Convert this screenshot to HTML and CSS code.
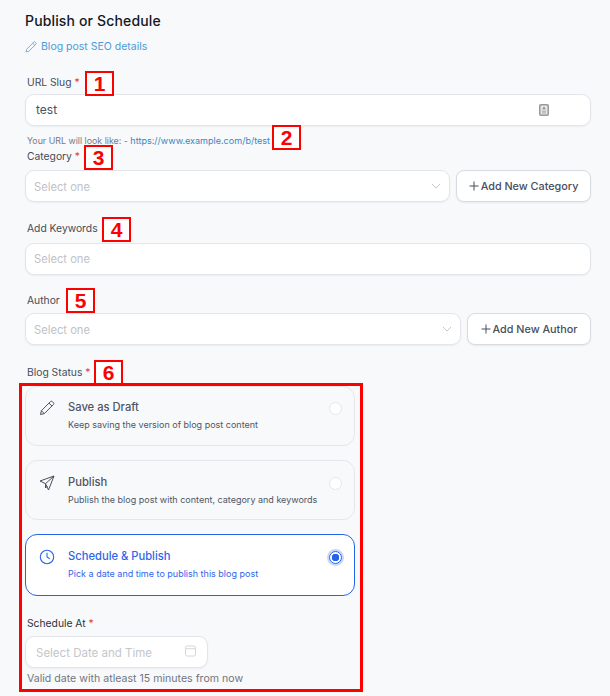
FILE: index.html
```html
<!DOCTYPE html>
<html lang="en">
<head>
<meta charset="utf-8">
<title>Publish or Schedule</title>
<link rel="stylesheet" href="styles.css">
</head>
<body>
<main class="page">
  <h1 class="title">Publish or Schedule</h1>
  <a class="seo-link" href="#">
    <svg class="seo-icon" viewBox="0 0 16 16" fill="none" stroke="currentColor" stroke-width="1"><path d="M1.500 14.500l.8-3.600L11.600 1.600a1.400 1.400 0 0 1 2 0l.8.8a1.400 1.400 0 0 1 0 2L5.100 13.700z"/><path d="M10.200 3l2.800 2.800"/></svg>
    Blog post SEO details
  </a>

  <div class="label label-slug">URL Slug <span class="req">*</span></div>
  <div class="field">
    <span class="value">test</span>
    <svg class="slug-icon" viewBox="0 0 10 12"><rect x=".75" y=".75" width="8.500" height="10.500" rx="1" fill="#e4e4e4" stroke="#9a9a9a" stroke-width="1.500"/><path d="M5 2.600l1.600 2.600H3.400z" fill="#888"/><path d="M3 7.200h4M3 9h4" stroke="#aaa"/></svg>
  </div>
  <p class="hint">Your URL will look like: - <a href="#">https://www.example.com/b/test</a></p>

  <div class="label label-tight">Category <span class="req">*</span></div>
  <div class="row">
    <div class="field select"><span class="placeholder">Select one</span><svg class="chev" viewBox="0 0 10 6" fill="none" stroke="#c4c7cc"><path d="M1 1l4 4 4-4"/></svg></div>
    <button class="add add-cat" type="button"><svg viewBox="0 0 10 10" stroke="currentColor" stroke-width="1"><path d="M5 .5v9M.5 5h9"/></svg>Add New Category</button>
  </div>

  <div class="label label-keys">Add Keywords</div>
  <div class="field"><span class="placeholder">Select one</span></div>

  <div class="label label-author">Author</div>
  <div class="row">
    <div class="field select"><span class="placeholder">Select one</span><svg class="chev" viewBox="0 0 10 6" fill="none" stroke="#c4c7cc"><path d="M1 1l4 4 4-4"/></svg></div>
    <button class="add add-auth" type="button"><svg viewBox="0 0 10 10" stroke="currentColor" stroke-width="1"><path d="M5 .5v9M.5 5h9"/></svg>Add New Author</button>
  </div>

  <div class="label label-status">Blog Status <span class="req">*</span></div>
  <div class="cards">
    <div class="card">
      <svg class="card-icon" viewBox="0 0 16 16" fill="none" stroke="currentColor" stroke-width="1"><path d="M1.500 14.500l.9-3.800L11.400 1.700a1.500 1.500 0 0 1 2.100 0l.8.8a1.500 1.500 0 0 1 0 2.100L5.300 13.600z"/><path d="M10 3.100l2.900 2.900M2.400 10.700l2.900 2.900"/></svg>
      <div class="card-text"><div class="card-title">Save as Draft</div><div class="card-desc">Keep saving the version of blog post content</div></div>
      <span class="radio"></span>
    </div>
    <div class="card">
      <svg class="card-icon" viewBox="0 0 16 16" fill="none" stroke="currentColor" stroke-width="1" stroke-linejoin="round"><path d="M15 1L1 6l5.500 2.700L9.500 15z"/><path d="M15 1L6.500 8.700v4.300l2-2"/></svg>
      <div class="card-text"><div class="card-title">Publish</div><div class="card-desc">Publish the blog post with content, category and keywords</div></div>
      <span class="radio"></span>
    </div>
    <div class="card active">
      <svg class="card-icon" viewBox="0 0 16 16" fill="none" stroke="currentColor" stroke-width="1.100"><circle cx="8" cy="8" r="6.700"/><path d="M8 3.800V8l2.700 1.800"/></svg>
      <div class="card-text"><div class="card-title">Schedule &amp; Publish</div><div class="card-desc">Pick a date and time to publish this blog post</div></div>
      <span class="radio on"></span>
    </div>
  </div>

  <div class="label label-sched">Schedule At <span class="req">*</span></div>
  <div class="field date">
    <span class="placeholder date-text">Select Date and Time</span>
    <svg class="cal" viewBox="0 0 12 12" fill="none" stroke="#d0d2d6"><rect x=".5" y=".5" width="11" height="11" rx="2"/><path d="M.5 3.500h11"/></svg>
  </div>
  <p class="help">Valid date with atleast 15 minutes from now</p>
</main>

<span class="tag tag1">1</span>
<span class="tag tag2">2</span>
<span class="tag tag3">3</span>
<span class="tag tag4">4</span>
<span class="tag tag5">5</span>
<span class="tag tag6">6</span>
<div class="highlight"></div>
</body>
</html>
```
FILE: styles.css
```css
* { box-sizing: border-box; }
html, body { margin: 0; height: 100%; }
body {
  position: relative;
  background: #f8f9fb;
  font-family: Inter, "Liberation Sans", sans-serif;
  color: #3f4654;
  overflow: hidden;
}
.page { width: 566px; margin-left: 25px; padding-top: 12px; }
.title { margin: 0; font-size: 14px; line-height: 17px; font-weight: 500; letter-spacing: .15px; color: #14181f; }
.seo-link {
  display: flex; align-items: center; gap: 4px;
  margin-top: 10px; height: 15px;
  font-size: 10.500px; color: #4a9bd8; text-decoration: none;
}
.seo-icon { width: 12px; height: 12px; flex: none; }
.label { font-size: 10.300px; line-height: 14px; margin-left: 2px; color: #454c59; }
.req { color: #e5484d; }
.label-slug { margin-top: 21px; margin-bottom: 5px; }
.label-tight { margin-top: 2px; margin-bottom: 7px; }
.label-keys { margin-top: 19px; margin-bottom: 8px; }
.label-author { margin-top: 18px; margin-bottom: 6px; }
.label-status { margin-top: 20px; margin-bottom: 7px; }
.label-sched { margin-top: 20px; margin-bottom: 6px; color: #2c313a; }
.field {
  display: flex; align-items: center;
  height: 32px; padding: 0 8px;
  background: #fff;
  border: 1px solid #e3e5ea; border-radius: 9px;
  box-shadow: 0 1px 2px rgba(20, 25, 40, .05);
}
.value { font-size: 12px; margin-left: 2px; margin-bottom: 1px; color: #4b5160; }
.slug-icon { width: 10px; height: 12px; margin-left: auto; margin-right: 33px; }
.placeholder { font-size: 11.200px; color: #c0c2c7; }
.select .placeholder { margin-top: 2px; }
.hint { margin: 8px 0 0 2px; font-size: 8.850px; line-height: 13px; color: #757b86; }
.hint a { font-size: 9.050px; color: #3a86c4; text-decoration: none; }
.row { display: flex; gap: 6px; }
.select { flex: 1; min-width: 0; }
.chev { width: 10px; height: 6px; margin-left: auto; margin-right: 0; }
.add {
  display: flex; align-items: center; justify-content: center; gap: 2px;
  height: 32px; padding: 0;
  background: #fff;
  border: 1px solid #d9dbe3; border-radius: 8px;
  box-shadow: 0 1px 2px rgba(20, 25, 40, .07);
  font: 450 10.800px Inter, "Liberation Sans", sans-serif; color: #474e5d;
}
.add svg { width: 10px; height: 10px; flex: none; }
.add-cat { width: 135px; }
.add-auth { width: 124px; }
.cards { display: flex; flex-direction: column; gap: 14px; width: 330px; }
.card {
  display: flex; align-items: flex-start;
  height: 60px; padding: 13px 12px 0 13px;
  border: 1px solid #e5e7eb; border-radius: 12px;
}
.card + .card { padding-top: 14px; }
.card-icon { width: 16px; height: 16px; flex: none; color: #4a505e; }
.card-text { margin-left: 13px; flex: 1; }
.card-title { font-size: 11.200px; line-height: 15px; font-weight: 450; color: #4f5563; }
.card-desc { margin-top: 4px; font-size: 9px; line-height: 12px; color: #505664; }
.radio {
  width: 13px; height: 13px; margin-top: 2px; flex: none;
  background: #fff; border: 1px solid #e5e7eb; border-radius: 50%;
}
.active { height: 62px; background: #fff; border-color: #2563eb; }
.active .card-icon, .active .card-title, .active .card-desc { color: #2f66ea; }
.radio.on {
  border: 1px solid #2563eb;
  background: radial-gradient(circle, #2563eb 0 3.500px, #fff 4px);
  box-shadow: 0 0 0 2px #c8d7fb;
}
.date { width: 183px; padding-right: 11px; }
.date-text { font-size: 11.500px; color: #c4c6ca; margin-left: 2px; margin-top: 1px; }
.cal { width: 11px; height: 12px; margin-left: auto; margin-bottom: 2px; }
.help { margin: 4px 0 0 2px; font-size: 10.600px; line-height: 14px; color: #70757f; }

.tag {
  position: absolute; width: 29px; height: 25px;
  display: flex; align-items: center; justify-content: center;
  border: 2px solid #f00; background: #fff;
  font: 700 21px/1 "Liberation Sans", sans-serif; color: #f00;
}
.tag1 { left: 85px; top: 71px; }
.tag2 { left: 272px; top: 125px; }
.tag3 { left: 84px; top: 145px; }
.tag4 { left: 102px; top: 217px; }
.tag5 { left: 66px; top: 288px; }
.tag6 { left: 94px; top: 360px; }
.highlight {
  position: absolute; left: 19px; top: 383px; width: 344px; height: 309px;
  border: 3px solid #f00;
}
```
